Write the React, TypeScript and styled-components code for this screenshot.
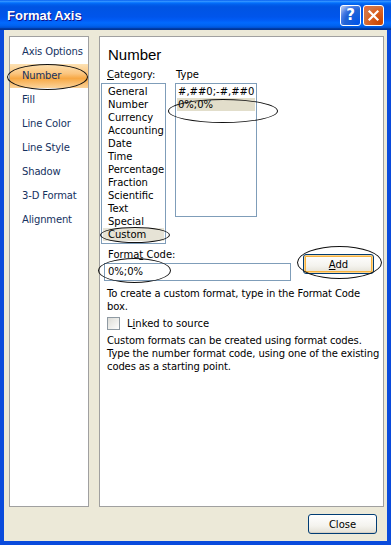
import styled, { createGlobalStyle } from "styled-components";

const GlobalStyle = createGlobalStyle`
  html, body {
    margin: 0;
    padding: 0;
    background: #ece9d8;
  }
  body {
    font-family: "DejaVu Sans", Verdana, sans-serif;
    font-size: 10px;
    color: #000;
  }
`;

const Window = styled.div`
  position: relative;
  width: 391px;
  height: 545px;
  display: flex;
  flex-direction: column;
  overflow: hidden;
`;

const TitleBar = styled.div`
  height: 30px;
  flex: none;
  display: flex;
  align-items: center;
  padding: 0 7px 0 7px;
  box-sizing: border-box;
  background: linear-gradient(
    to bottom,
    #0058ee 0%,
    #3593ff 4%,
    #288eff 6%,
    #127dff 8%,
    #036ffc 10%,
    #0262ee 14%,
    #0057e5 20%,
    #0054e3 24%,
    #0055eb 56%,
    #005bf5 66%,
    #026afe 76%,
    #0062ef 86%,
    #0052d6 92%,
    #0040ab 94%,
    #003092 100%
  );
`;

const Title = styled.div`
  flex: 1;
  color: #fff;
  font-family: "Liberation Sans", Arial, sans-serif;
  font-weight: bold;
  font-size: 13px;
  text-shadow: 1px 1px #0f1089;
`;

const TitleButton = styled.div<{ $close?: boolean }>`
  width: 21px;
  height: 21px;
  box-sizing: border-box;
  margin-left: 2px;
  border: 1px solid #fff;
  border-radius: 3px;
  display: flex;
  align-items: center;
  justify-content: center;
  color: #fff;
  font-family: "DejaVu Sans", sans-serif;
  font-weight: bold;
  font-size: 15px;
  background: ${(p) =>
    p.$close
      ? "radial-gradient(circle at 85% 85%, #cc4600 0%, #dc6527 55%, #cd7546 70%, #e66b3b 90%)"
      : "radial-gradient(circle at 90% 90%, #0054e9 0%, #2263d5 55%, #4479e4 70%, #a3bbec 90%)"};
`;

const Frame = styled.div`
  flex: 1;
  display: flex;
  flex-direction: column;
  background: #ece9d8;
  border: 4px solid #0a4bdc;
  border-top: none;
  padding: 6px 3px 0 5px;
`;

const Panels = styled.div`
  display: flex;
  gap: 10px;
  height: 471px;
`;

const NavPanel = styled.div`
  flex: none;
  width: 80px;
  box-sizing: border-box;
  background: #fff;
  border: 1px solid #a0a0a0;
  padding-top: 3px;
`;

const NavItem = styled.div<{ $active?: boolean }>`
  height: 24px;
  line-height: 24px;
  padding-left: 12px;
  white-space: nowrap;
  letter-spacing: -0.15px;
  color: #15325f;
  background: ${(p) =>
    p.$active
      ? "linear-gradient(to bottom, #fde2b4 0%, #fbc57e 40%, #f7a844 60%, #fbd39a 100%)"
      : "transparent"};
`;

const MainPanel = styled.div`
  flex: 1;
  min-width: 0;
  box-sizing: border-box;
  background: #fff;
  border: 1px solid #a0a0a0;
  padding: 9px 0 0 1px;
  display: flex;
  flex-direction: column;
  overflow: hidden;
`;

const Heading = styled.div`
  font-family: "Liberation Sans", Arial, sans-serif;
  font-size: 15px;
  line-height: 18px;
  margin-left: 7px;
  margin-bottom: 4px;
`;

const ListsRow = styled.div`
  display: flex;
  gap: 9px;
  align-items: flex-start;
`;

const Column = styled.div<{ $width: number }>`
  flex: none;
  width: ${(p) => p.$width}px;
  display: flex;
  flex-direction: column;
`;

const Label = styled.div<{ $indent: number }>`
  line-height: 13px;
  margin-left: ${(p) => p.$indent}px;
  margin-bottom: 2px;
  white-space: nowrap;
`;

const ListBox = styled.div<{ $height: number }>`
  height: ${(p) => p.$height}px;
  box-sizing: border-box;
  border: 1px solid #7f9db9;
  padding: 1px 0;
  background: #fff;
  overflow: hidden;
`;

const ListItem = styled.div<{ $selected?: boolean; $pad: number; $tone?: string }>`
  line-height: 13px;
  height: 13px;
  padding-left: ${(p) => p.$pad}px;
  margin: 0 1px;
  white-space: nowrap;
  background: ${(p) => (p.$selected ? p.$tone || "#e6e3d6" : "transparent")};
`;

const FormatRow = styled.div`
  display: flex;
  align-items: flex-start;
  margin-top: 4px;
`;

const FormatColumn = styled.div`
  display: flex;
  flex-direction: column;
`;

const TextInput = styled.div`
  width: 187px;
  height: 18px;
  box-sizing: border-box;
  margin-left: 3px;
  border: 1px solid #7f9db9;
  padding-left: 3px;
  line-height: 16px;
  background: #fff;
`;

const Button = styled.div<{ $hot?: boolean; $width: number }>`
  flex: none;
  width: ${(p) => p.$width}px;
  height: 20px;
  box-sizing: border-box;
  border: 1px solid #003c74;
  border-radius: 3px;
  display: flex;
  align-items: center;
  justify-content: center;
  background: linear-gradient(to bottom, #ffffff 0%, #f4f3ee 60%, #e3e0d4 100%);
  box-shadow: ${(p) =>
    p.$hot
      ? "inset 0 0 0 1px #ffd48a, inset 0 0 0 2px #f5b240"
      : "inset 0 -1px 0 #d6d0c5"};
`;

const AddButton = styled(Button)`
  margin-top: 6px;
  margin-left: 12px;
`;

const Underline = styled.span`
  text-decoration: underline;
`;

const Help = styled.div<{ $top: number }>`
  line-height: 13px;
  margin-left: 6px;
  margin-top: ${(p) => p.$top}px;
  white-space: nowrap;
  letter-spacing: -0.12px;
`;

const CheckRow = styled.div`
  display: flex;
  align-items: center;
  gap: 7px;
  margin: 4px 0 0 6px;
  line-height: 13px;
`;

const CheckBox = styled.div`
  width: 13px;
  height: 13px;
  box-sizing: border-box;
  border: 1px solid #8f9aa3;
  background: linear-gradient(135deg, #dcdcd7 0%, #f4f4f2 70%, #fff 100%);
`;

const Footer = styled.div`
  flex: 1;
  display: flex;
  justify-content: flex-end;
  align-items: flex-start;
  padding: 7px 7px 0 0;
`;

const Oval = styled.div<{ $x: number; $y: number; $w: number; $h: number }>`
  position: absolute;
  left: ${(p) => p.$x}px;
  top: ${(p) => p.$y}px;
  width: ${(p) => p.$w}px;
  height: ${(p) => p.$h}px;
  box-sizing: border-box;
  border: 1px solid #111;
  border-radius: 50%;
  pointer-events: none;
`;

const navItems = [
  "Axis Options",
  "Number",
  "Fill",
  "Line Color",
  "Line Style",
  "Shadow",
  "3-D Format",
  "Alignment",
];

const categories = [
  "General",
  "Number",
  "Currency",
  "Accounting",
  "Date",
  "Time",
  "Percentage",
  "Fraction",
  "Scientific",
  "Text",
  "Special",
  "Custom",
];

const types = ["#,##0;-#,##0", "0%;0%"];

export default function App() {
  return (
    <>
      <GlobalStyle />
      <Window>
        <TitleBar>
          <Title>Format Axis</Title>
          <TitleButton>?</TitleButton>
          <TitleButton $close>
            <svg width="13" height="13" viewBox="0 0 13 13">
              <path
                d="M2.5 2.5 L10.5 10.5 M10.5 2.5 L2.5 10.5"
                stroke="#fff"
                strokeWidth="2.2"
                strokeLinecap="square"
              />
            </svg>
          </TitleButton>
        </TitleBar>
        <Frame>
          <Panels>
            <NavPanel>
              {navItems.map((n) => (
                <NavItem key={n} $active={n === "Number"}>
                  {n}
                </NavItem>
              ))}
            </NavPanel>
            <MainPanel>
              <Heading>Number</Heading>
              <ListsRow>
                <Column $width={65}>
                  <Label $indent={6}>
                    <Underline>C</Underline>ategory:
                  </Label>
                  <ListBox $height={161}>
                    {categories.map((c) => (
                      <ListItem key={c} $pad={5} $selected={c === "Custom"}>
                        {c}
                      </ListItem>
                    ))}
                  </ListBox>
                </Column>
                <Column $width={82}>
                  <Label $indent={1}>Type</Label>
                  <ListBox $height={134}>
                    {types.map((t) => (
                      <ListItem
                        key={t}
                        $pad={1}
                        $tone="#e2decb"
                        $selected={t === "0%;0%"}
                      >
                        {t}
                      </ListItem>
                    ))}
                  </ListBox>
                </Column>
              </ListsRow>
              <FormatRow>
                <FormatColumn>
                  <Label $indent={7}>
                    Forma<Underline>t</Underline> Code:
                  </Label>
                  <TextInput>0%;0%</TextInput>
                </FormatColumn>
                <AddButton $hot $width={71}>
                  <span>
                    <Underline>A</Underline>dd
                  </span>
                </AddButton>
              </FormatRow>
              <Help $top={6}>
                To create a custom format, type in the Format Code
                <br />
                box.
              </Help>
              <CheckRow>
                <CheckBox />
                <span>
                  L<Underline>i</Underline>nked to source
                </span>
              </CheckRow>
              <Help $top={4}>
                Custom formats can be created using format codes.
                <br />
                Type the number format code, using one of the existing
                <br />
                codes as a starting point.
              </Help>
            </MainPanel>
          </Panels>
          <Footer>
            <Button $width={69}>Close</Button>
          </Footer>
        </Frame>
        <Oval $x={7} $y={64} $w={81} $h={26} />
        <Oval $x={168} $y={99} $w={110} $h={24} />
        <Oval $x={100} $y={227} $w={70} $h={16} />
        <Oval $x={98} $y={258} $w={73} $h={25} />
        <Oval $x={297} $y={246} $w={85} $h={33} />
      </Window>
    </>
  );
}
